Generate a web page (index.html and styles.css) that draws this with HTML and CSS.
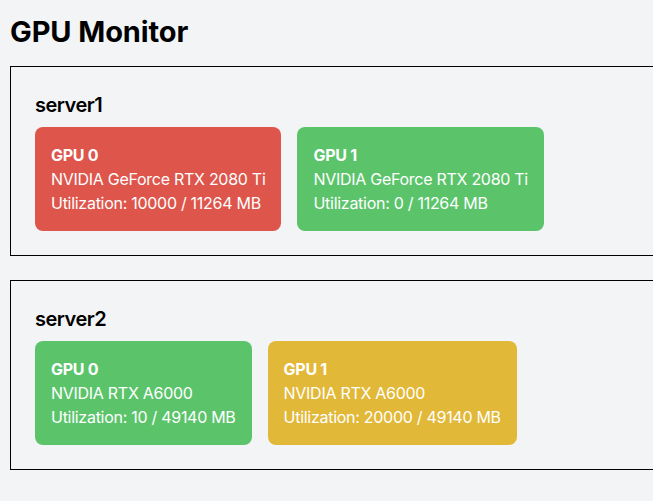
FILE: index.html
```html
<!DOCTYPE html>
<html lang="en">
<head>
<meta charset="utf-8">
<title>GPU Monitor</title>
<link rel="stylesheet" href="styles.css">
</head>
<body>
<h1 class="title">GPU Monitor</h1>
<section class="server">
  <h3 class="server-name">server1</h3>
  <div class="gpus">
    <div class="gpu gpu-red">
      <div class="gpu-id">GPU 0</div>
      <div>NVIDIA GeForce RTX 2080 Ti</div>
      <div>Utilization: 10000 / 11264 MB</div>
    </div>
    <div class="gpu gpu-green">
      <div class="gpu-id">GPU 1</div>
      <div>NVIDIA GeForce RTX 2080 Ti</div>
      <div>Utilization: 0 / 11264 MB</div>
    </div>
  </div>
</section>
<section class="server">
  <h3 class="server-name">server2</h3>
  <div class="gpus">
    <div class="gpu gpu-green">
      <div class="gpu-id">GPU 0</div>
      <div>NVIDIA RTX A6000</div>
      <div>Utilization: 10 / 49140 MB</div>
    </div>
    <div class="gpu gpu-yellow">
      <div class="gpu-id">GPU 1</div>
      <div>NVIDIA RTX A6000</div>
      <div>Utilization: 20000 / 49140 MB</div>
    </div>
  </div>
</section>
</body>
</html>
```
FILE: styles.css
```css
html, body {
  margin: 0;
  background: #f3f4f6;
}
body {
  padding: 10px;
  font-family: Inter, "Noto Sans", sans-serif;
  color: #000;
  overflow: hidden;
}
.title {
  font-size: 29px;
  line-height: 36px;
  font-weight: 700;
  letter-spacing: -0.1px;
  margin: 4px 0 16px;
}
.server {
  width: 100%;
  border: 1px solid #000;
  padding: 24px;
  margin-bottom: 24px;
}
.server-name {
  font-size: 20px;
  line-height: 28px;
  font-weight: 600;
  letter-spacing: -0.5px;
  margin: 0 0 8px;
}
.gpus {
  display: flex;
  gap: 16px;
}
.gpu {
  padding: 16px;
  border-radius: 8px;
  color: #fff;
  font-size: 16px;
  line-height: 24px;
  letter-spacing: -0.28px;
}
.gpu-id {
  font-weight: 700;
}
.gpu-red { background: #de554b; }
.gpu-green { background: #5bc46b; }
.gpu-yellow { background: #e2b838; }
```
